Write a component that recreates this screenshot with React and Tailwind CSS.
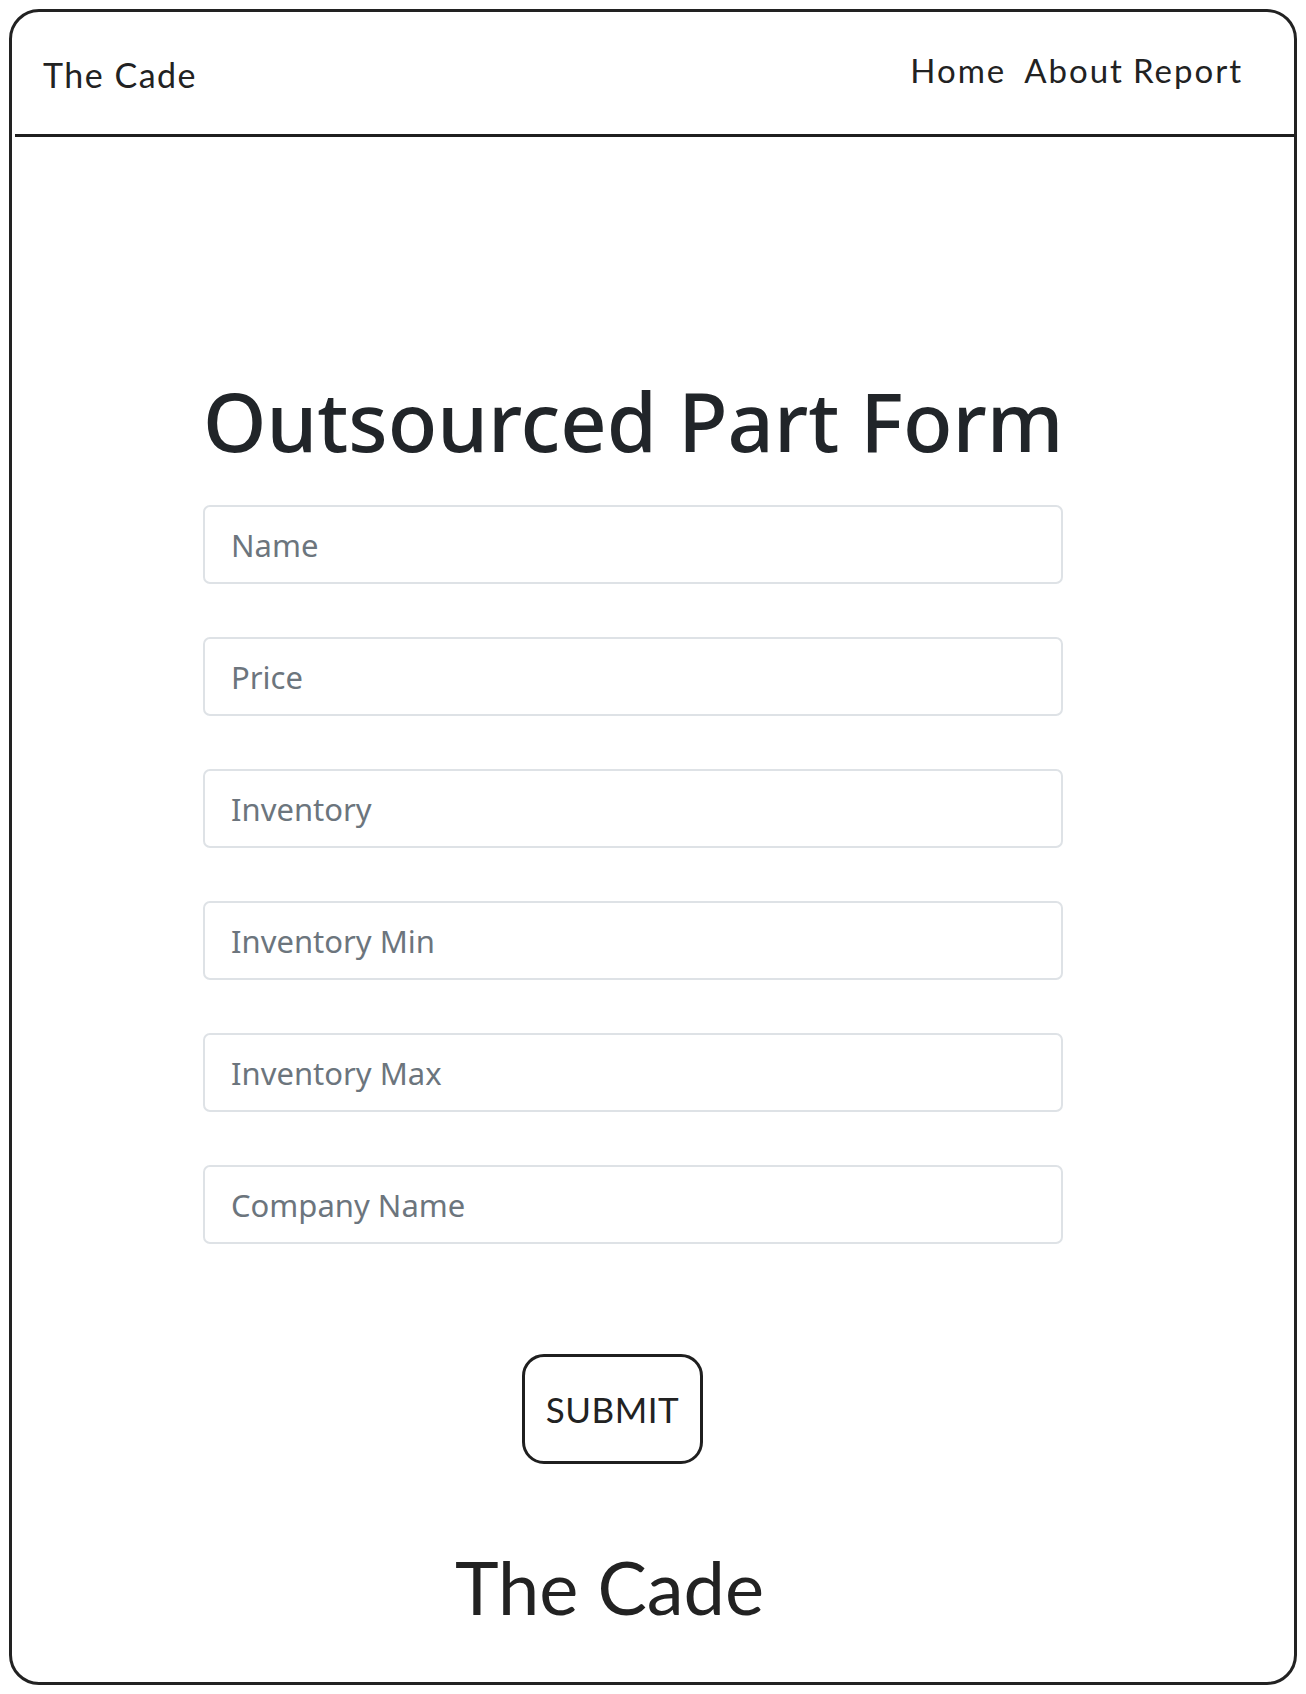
const fields = ['Name', 'Price', 'Inventory', 'Inventory Min', 'Inventory Max', 'Company Name'];

function App() {
  return (
    <div className="bg-white p-[9px] w-[1306px]">
      <div className="h-[1676px] border-[3px] border-[#222] rounded-[30px] flex flex-col font-['Lato',sans-serif] text-[#222]">
        {/* Header */}
        <header className="shrink-0 h-[125px] ml-[3px] border-b-[3px] border-[#1f1f1f] flex items-start justify-between pl-[28px] pr-[51px]">
          <div className="mt-[46px] text-[34px] leading-none tracking-[1.5px]">The Cade</div>
          <nav className="mt-[42px] flex text-[33px] leading-none tracking-[2px]">
            <a className="mr-[18px]">Home</a>
            <a className="mr-[9px]">About</a>
            <a>Report</a>
          </nav>
        </header>

        {/* Form */}
        <main className="flex flex-col pl-[191px]">
          <h1 className="mt-[243px] w-[860px] whitespace-nowrap text-[81px] leading-none font-medium text-[#212529] font-['Noto_Sans',sans-serif]">
            Outsourced Part Form
          </h1>
          <form className="mt-[44px] w-[860px] flex flex-col gap-[53px]">
            {fields.map((f) => (
              <input
                key={f}
                type="text"
                placeholder={f}
                className="h-[79px] w-full px-[26px] bg-white border-[2px] border-[#dee2e6] rounded-[7px] text-[31px] font-['Noto_Sans',sans-serif] text-[#212529] placeholder-[#6c757d] outline-none"
              />
            ))}
          </form>
          <div className="w-[860px] flex mt-[110px] pl-[319px]">
            <button className="w-[181px] h-[110px] border-[3px] border-[#1f1f1f] rounded-[22px] text-[35px] tracking-[0.5px] bg-white">
              SUBMIT
            </button>
          </div>
        </main>

        <footer className="mt-[86px] pl-[443px] text-[74px] leading-none">The Cade</footer>
      </div>
    </div>
  );
}

export default App;
